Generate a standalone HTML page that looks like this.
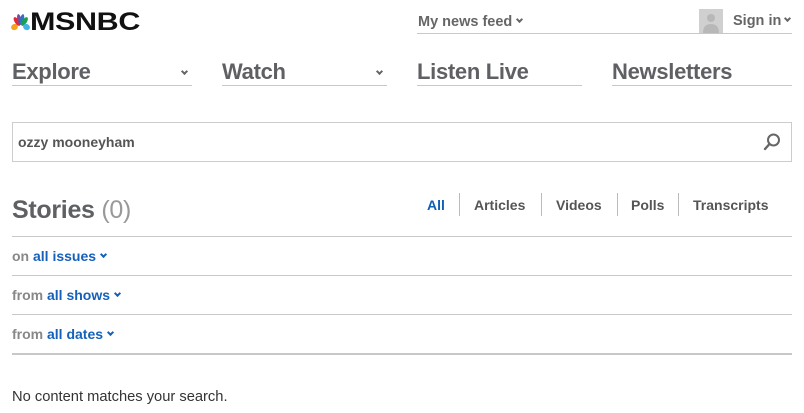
<!DOCTYPE html>
<html><head><meta charset="utf-8"><style>
*{margin:0;padding:0;box-sizing:border-box}
body{width:804px;height:413px;background:#fff;font-family:"Liberation Sans",Arial,sans-serif;position:relative;overflow:hidden}
.a{position:absolute;white-space:nowrap}
.nav{font-size:22px;font-weight:bold;color:#5f6063;top:59px;letter-spacing:-0.3px}
.ul{position:absolute;height:1px;background:#c8c8c8}
.chev{position:absolute;width:6px;height:6px;border-right:2px solid #666;border-bottom:2px solid #666;transform:rotate(45deg)}
.ic{display:inline-block;width:5px;height:5px;border-right:2px solid #666;border-bottom:2px solid #666;transform:rotate(45deg);vertical-align:4px;margin-left:5px}
.bc{border-color:#1560b8}
.tab{font-size:14px;font-weight:bold;color:#555;top:197px}
.sep{position:absolute;top:193px;width:1px;height:23px;background:#bbb}
.row{font-size:14px;font-weight:bold;color:#888}
.row b{color:#1560b8}
</style></head><body>
<svg class="a" style="left:11px;top:12px" width="19" height="20" viewBox="0 0 19 20">
<ellipse cx="3.5" cy="15" rx="3.5" ry="3" fill="#f6a21c" transform="rotate(-30 3.5 15)"/>
<ellipse cx="6" cy="9.5" rx="2.3" ry="5" fill="#e3283c" transform="rotate(-35 6 9.5)"/>
<ellipse cx="8.3" cy="7.5" rx="2" ry="5.5" fill="#7d4a9c" transform="rotate(-12 8.3 7.5)"/>
<ellipse cx="11" cy="7.5" rx="2" ry="5.5" fill="#2b74c6" transform="rotate(12 11 7.5)"/>
<ellipse cx="13.5" cy="9.5" rx="2.3" ry="5" fill="#1ba14b" transform="rotate(35 13.5 9.5)"/>
<ellipse cx="15.5" cy="15" rx="3.5" ry="3" fill="#46b3e6" transform="rotate(30 15.5 15)"/>
</svg>
<div class="a" style="left:30px;top:8px;font-size:25px;font-weight:bold;color:#111;transform:scaleX(1.22);transform-origin:0 0;letter-spacing:-0.3px">MSNBC</div>

<div class="a" style="left:418px;top:14px;font-size:14.5px;font-weight:bold;color:#666">My news feed<span class="ic"></span></div>
<div class="ul" style="left:417px;top:33px;width:375px"></div>
<div class="a" style="left:699px;top:9px;width:24px;height:24px;background:#d0d0d0">
<svg width="24" height="24"><circle cx="12" cy="9" r="4" fill="#b8b8b8"/><path d="M4 24 Q4 15 12 15 Q20 15 20 24Z" fill="#b8b8b8"/></svg></div>
<div class="a" style="left:733px;top:13px;font-size:14.5px;font-weight:bold;color:#666">Sign in<span class="ic" style="margin-left:4px"></span></div>

<div class="a nav" style="left:12px">Explore</div>
<div class="chev" style="left:182px;top:69px;width:5px;height:5px"></div>
<div class="ul" style="left:12px;top:85px;width:180px"></div>
<div class="a nav" style="left:222px">Watch</div>
<div class="chev" style="left:377px;top:69px;width:5px;height:5px"></div>
<div class="ul" style="left:222px;top:85px;width:165px"></div>
<div class="a nav" style="left:417px">Listen Live</div>
<div class="ul" style="left:417px;top:85px;width:165px"></div>
<div class="a nav" style="left:612px">Newsletters</div>
<div class="ul" style="left:612px;top:85px;width:180px"></div>

<div class="a" style="left:12px;top:122px;width:780px;height:40px;border:1px solid #ccc"></div>
<div class="a" style="left:18px;top:134px;font-size:14px;font-weight:bold;color:#555">ozzy mooneyham</div>
<svg class="a" style="left:762px;top:132px" width="20" height="20"><circle cx="11.5" cy="8" r="5.5" fill="none" stroke="#666" stroke-width="2"/><line x1="7.5" y1="12" x2="3" y2="17" stroke="#666" stroke-width="2.4" stroke-linecap="round"/></svg>

<div class="a" style="left:12px;top:196px;font-size:25px;font-weight:bold;color:#5f6063;letter-spacing:-0.3px">Stories <span style="font-weight:normal;color:#999">(0)</span></div>
<div class="a tab" style="left:427px;color:#0f5fb3">All</div>
<div class="sep" style="left:459px"></div>
<div class="a tab" style="left:474px">Articles</div>
<div class="sep" style="left:541px"></div>
<div class="a tab" style="left:556px">Videos</div>
<div class="sep" style="left:617px"></div>
<div class="a tab" style="left:631px">Polls</div>
<div class="sep" style="left:678px"></div>
<div class="a tab" style="left:693px">Transcripts</div>

<div class="ul" style="left:12px;top:236px;width:780px"></div>
<div class="a row" style="left:12px;top:248px">on <b>all issues</b><span class="ic bc"></span></div>
<div class="ul" style="left:12px;top:275px;width:780px"></div>
<div class="a row" style="left:12px;top:287px">from <b>all shows</b><span class="ic bc"></span></div>
<div class="ul" style="left:12px;top:314px;width:780px"></div>
<div class="a row" style="left:12px;top:326px">from <b>all dates</b><span class="ic bc"></span></div>
<div class="ul" style="left:12px;top:353px;width:780px;height:2px"></div>

<div class="a" style="left:12px;top:389px;font-size:14.7px;color:#333">No content matches your search.</div>
</body></html>
